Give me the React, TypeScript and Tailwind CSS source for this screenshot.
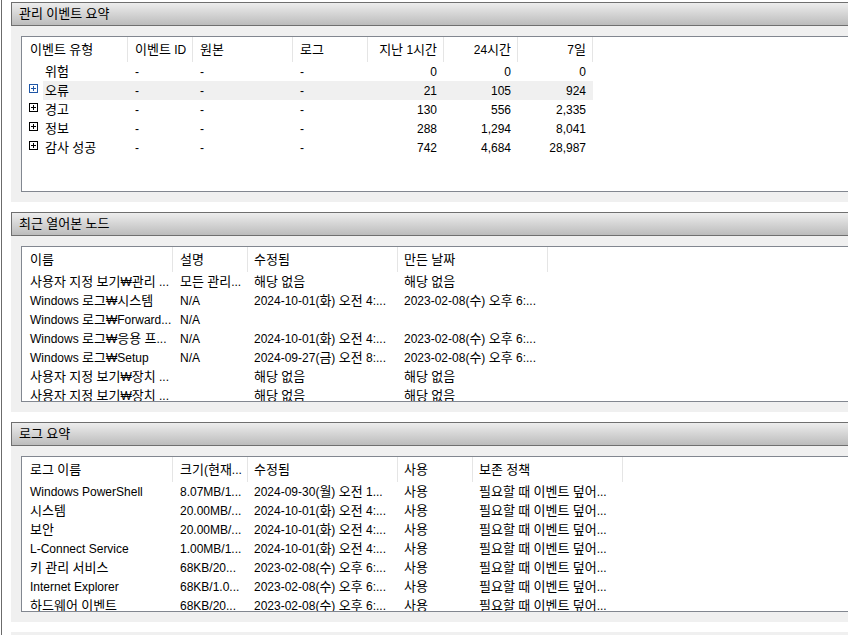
import React from "react";

type Cell = { t: string; c: string };

const HDR_BORDER = "border-r border-[#e5e5e5]";
const NO_BORDER = "border-r border-transparent";

function K({ t }: { t: string }) {
  const parts = t.split(/([\uAC00-\uD7A3\u3131-\u318E]+)/);
  return (
    <>
      {parts.map((p, i) =>
        i % 2 === 1 ? (
          <span key={i} className="text-[13px]">
            {p}
          </span>
        ) : (
          <React.Fragment key={i}>{p}</React.Fragment>
        )
      )}
    </>
  );
}

function PlusIcon({ blue }: { blue?: boolean }) {
  const c = blue ? "#1f56a6" : "#000000";
  return (
    <svg width="9" height="9" viewBox="0 0 9 9" className="block" shapeRendering="crispEdges">
      <rect x="0.5" y="0.5" width="8" height="8" fill="white" stroke={c} />
      <path d="M2 4.5h5M4.5 2v5" stroke={c} />
    </svg>
  );
}

function HeaderBar({ title }: { title: string }) {
  return (
    <div className="h-[24px] border-t border-b border-l border-[#6f6f6f] bg-gradient-to-b from-[#ededed] to-[#bcbcbc] flex items-center pl-[7px] text-[12px] text-black whitespace-nowrap">
      <span>
        <K t={title} />
      </span>
    </div>
  );
}

function Section({ title, children }: { title: string; children: React.ReactNode }) {
  return (
    <div className="mb-[10px]">
      <HeaderBar title={title} />
      <div className="bg-[#f0f0f0] pt-[10px] pb-[10px] pl-[10px]">
        <div className="h-[156px] w-[880px] border border-[#828790] bg-white overflow-hidden">
          {children}
        </div>
      </div>
    </div>
  );
}

function HeadRow({ cells }: { cells: Cell[] }) {
  return (
    <div className="flex h-[25px]">
      {cells.map((x, i) => (
        <div key={i} className={`${x.c} ${HDR_BORDER} shrink-0 flex items-center whitespace-nowrap overflow-hidden`}>
          <span className="w-full">
            <K t={x.t} />
          </span>
        </div>
      ))}
    </div>
  );
}

function DataRow({ cells, cols }: { cells: string[]; cols: string[] }) {
  return (
    <div className="flex h-[19px]">
      {cells.map((t, i) => (
        <div key={i} className={`${cols[i]} ${NO_BORDER} shrink-0 flex items-center whitespace-nowrap overflow-hidden`}>
          <span className="w-full">
            <K t={t} />
          </span>
        </div>
      ))}
    </div>
  );
}

/* ---------- table 1 ---------- */
const t1Head: Cell[] = [
  { t: "이벤트 유형", c: "w-[106px] pl-[8px]" },
  { t: "이벤트 ID", c: "w-[65px] pl-[7px]" },
  { t: "원본", c: "w-[100px] pl-[7px]" },
  { t: "로그", c: "w-[75px] pl-[7px]" },
  { t: "지난 1시간", c: "w-[76px] pr-[6px] text-right" },
  { t: "24시간", c: "w-[74px] pr-[6px] text-right" },
  { t: "7일", c: "w-[75px] pr-[6px] text-right" },
];

const t1RestCols = [
  "w-[65px] pl-[7px]",
  "w-[100px] pl-[7px]",
  "w-[75px] pl-[7px]",
  "w-[76px] pr-[6px] text-right",
  "w-[74px] pr-[6px] text-right",
  "w-[75px] pr-[6px] text-right",
];

const t1Rows: { name: string; icon: boolean; hl?: boolean; v: string[] }[] = [
  { name: "위험", icon: false, v: ["-", "-", "-", "0", "0", "0"] },
  { name: "오류", icon: true, hl: true, v: ["-", "-", "-", "21", "105", "924"] },
  { name: "경고", icon: true, v: ["-", "-", "-", "130", "556", "2,335"] },
  { name: "정보", icon: true, v: ["-", "-", "-", "288", "1,294", "8,041"] },
  { name: "감사 성공", icon: true, v: ["-", "-", "-", "742", "4,684", "28,987"] },
];

function Table1() {
  return (
    <div>
      <HeadRow cells={t1Head} />
      {t1Rows.map((r, i) => (
        <div key={i} className="flex h-[19px]">
          <div className="w-[21px] shrink-0 pl-[7px] pt-[3px]">{r.icon && <PlusIcon blue={r.hl} />}</div>
          <div className={`flex h-[19px] ${r.hl ? "bg-[#f0f0f0]" : ""}`}>
            <div className={`w-[85px] pl-[2px] ${NO_BORDER} shrink-0 flex items-center whitespace-nowrap overflow-hidden`}>
              <span>
                <K t={r.name} />
              </span>
            </div>
            {r.v.map((t, j) => (
              <div key={j} className={`${t1RestCols[j]} ${NO_BORDER} shrink-0 flex items-center whitespace-nowrap overflow-hidden`}>
                <span className="w-full">{t}</span>
              </div>
            ))}
          </div>
        </div>
      ))}
    </div>
  );
}

/* ---------- table 2 ---------- */
const t2Cols = ["w-[151px] pl-[8px]", "w-[75px] pl-[7px]", "w-[150px] pl-[6px]", "w-[150px] pl-[6px]"];
const t2Head: Cell[] = [
  { t: "이름", c: t2Cols[0] },
  { t: "설명", c: t2Cols[1] },
  { t: "수정됨", c: t2Cols[2] },
  { t: "만든 날짜", c: t2Cols[3] },
];
const t2Rows: string[][] = [
  ["사용자 지정 보기₩관리 ...", "모든 관리...", "해당 없음", "해당 없음"],
  ["Windows 로그₩시스템", "N/A", "2024-10-01(화) 오전 4:...", "2023-02-08(수) 오후 6:..."],
  ["Windows 로그₩Forward...", "N/A", "", ""],
  ["Windows 로그₩응용 프...", "N/A", "2024-10-01(화) 오전 4:...", "2023-02-08(수) 오후 6:..."],
  ["Windows 로그₩Setup", "N/A", "2024-09-27(금) 오전 8:...", "2023-02-08(수) 오후 6:..."],
  ["사용자 지정 보기₩장치 ...", "", "해당 없음", "해당 없음"],
  ["사용자 지정 보기₩장치 ...", "", "해당 없음", "해당 없음"],
];

/* ---------- table 3 ---------- */
const t3Cols = [
  "w-[151px] pl-[8px]",
  "w-[75px] pl-[7px]",
  "w-[150px] pl-[6px]",
  "w-[75px] pl-[6px]",
  "w-[150px] pl-[6px]",
];
const t3Head: Cell[] = [
  { t: "로그 이름", c: t3Cols[0] },
  { t: "크기(현재...", c: t3Cols[1] },
  { t: "수정됨", c: t3Cols[2] },
  { t: "사용", c: t3Cols[3] },
  { t: "보존 정책", c: t3Cols[4] },
];
const POL = "필요할 때 이벤트 덮어...";
const t3Rows: string[][] = [
  ["Windows PowerShell", "8.07MB/1...", "2024-09-30(월) 오전 1...", "사용", POL],
  ["시스템", "20.00MB/...", "2024-10-01(화) 오전 4:...", "사용", POL],
  ["보안", "20.00MB/...", "2024-10-01(화) 오전 4:...", "사용", POL],
  ["L-Connect Service", "1.00MB/1...", "2024-10-01(화) 오전 4:...", "사용", POL],
  ["키 관리 서비스", "68KB/20...", "2023-02-08(수) 오후 6:...", "사용", POL],
  ["Internet Explorer", "68KB/1.0...", "2023-02-08(수) 오후 6:...", "사용", POL],
  ["하드웨어 이벤트", "68KB/20...", "2023-02-08(수) 오후 6:...", "사용", POL],
];

export default function App() {
  return (
    <div className="w-[848px] h-[635px] overflow-hidden bg-white flex text-[12px] text-black font-['Liberation_Sans','Noto_Sans_CJK_KR',sans-serif]">
      <div className="w-[1px] ml-[1px] h-full bg-[#6b6b6b] shrink-0" />
      <div className="ml-[9px] pt-[2px] w-[900px] shrink-0 flex flex-col">
        <Section title="관리 이벤트 요약">
          <Table1 />
        </Section>
        <Section title="최근 열어본 노드">
          <HeadRow cells={t2Head} />
          {t2Rows.map((r, i) => (
            <DataRow key={i} cells={r} cols={t2Cols} />
          ))}
        </Section>
        <Section title="로그 요약">
          <HeadRow cells={t3Head} />
          {t3Rows.map((r, i) => (
            <DataRow key={i} cells={r} cols={t3Cols} />
          ))}
        </Section>
        <div className="h-[20px] bg-[#f0f0f0]" />
      </div>
    </div>
  );
}
